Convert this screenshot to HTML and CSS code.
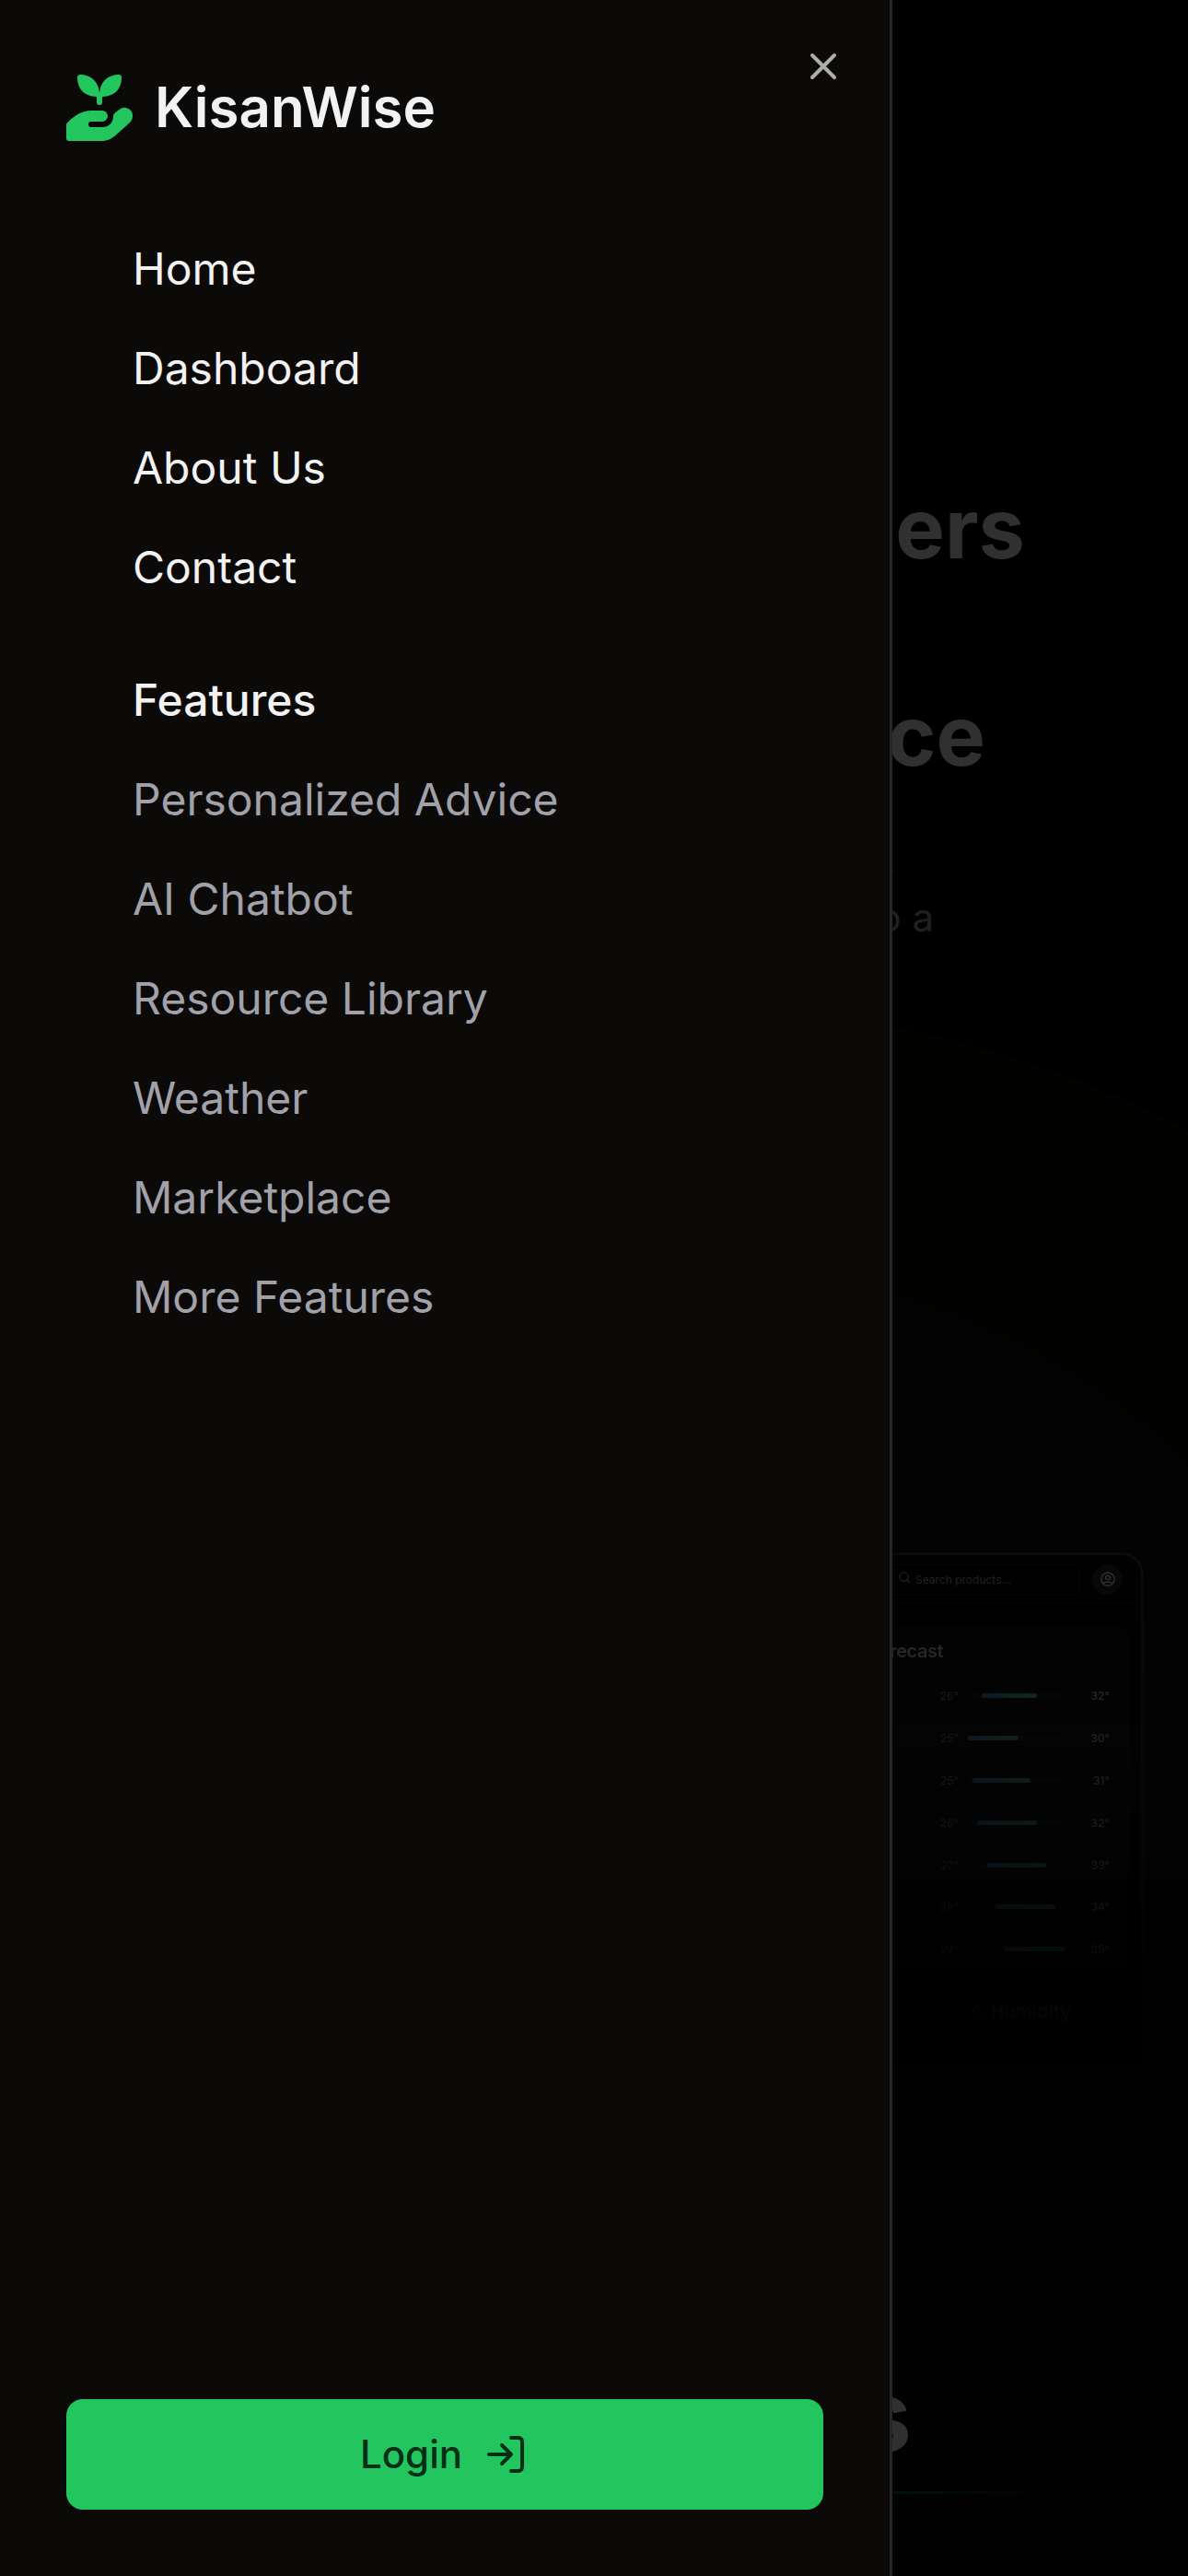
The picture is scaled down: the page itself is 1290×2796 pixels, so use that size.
FILE: index.html
```html
<!DOCTYPE html>
<html lang="en">
<head>
<meta charset="utf-8">
<title>KisanWise</title>
<link rel="stylesheet" href="styles.css">
</head>
<body>
<div class="screen">
  <aside class="drawer">
    <button class="close" aria-label="Close">
      <svg viewBox="0 0 24 24" width="48" height="48" fill="none" stroke="currentColor" stroke-width="2" stroke-linecap="round" stroke-linejoin="round"><path d="M18 6 6 18M6 6l12 12"/></svg>
    </button>
    <div class="brand">
      <svg viewBox="0 0 24 24" width="72" height="72" fill="currentColor">
        <path d="M4 1a1 1 0 0 1 1-1c4 0 6.700 2.600 7 6.600C12.300 2.600 15 0 19 0a1 1 0 0 1 1 1c0 4.200-2.400 6.900-7 7v2a1 1 0 0 1-2 0V8C6.400 7.900 4 5.200 4 1Z"/>
        <path d="M0 17.800C2.400 15.200 5.400 13 9 13h4a2 2 0 0 1 0 4H9a1 1 0 0 0 0 2h4c2.400 0 4-1.600 4-4 0-.5.200-.8.500-1.100l1.400-1.100A3 3 0 0 1 24 15c0 1-.4 1.800-1.100 2.400L18 21.800C16.400 23.200 14.700 24 12.500 24H.8a.8.800 0 0 1-.8-.8Z"/>
      </svg>
      <span>KisanWise</span>
    </div>
    <nav class="menu">
      <a>Home</a>
      <a>Dashboard</a>
      <a>About Us</a>
      <a>Contact</a>
    </nav>
    <nav class="menu features">
      <h2>Features</h2>
      <a>Personalized Advice</a>
      <a>AI Chatbot</a>
      <a>Resource Library</a>
      <a>Weather</a>
      <a>Marketplace</a>
      <a>More Features</a>
    </nav>
    <button class="login">
      <span>Login</span>
      <svg viewBox="0 0 24 24" width="48" height="48" fill="none" stroke="currentColor" stroke-width="2" stroke-linecap="round" stroke-linejoin="round"><path d="M15 3h4a2 2 0 0 1 2 2v14a2 2 0 0 1-2 2h-4M10 17l5-5-5-5M15 12H3"/></svg>
    </button>
  </aside>

  <main class="page">
    <div class="title title-first">ers</div>
    <div class="title title-last">ce</div>
    <div class="lead lead-first">,</div>
    <div class="lead">o a</div>

    <section class="preview">
      <header class="bar">
        <div class="search">
          <svg viewBox="0 0 24 24" width="14" height="14" fill="none" stroke="currentColor" stroke-width="2" stroke-linecap="round"><circle cx="11" cy="11" r="8"/><path d="m21 21-4.300-4.300"/></svg>
          <span>Search products...</span>
        </div>
        <div class="avatar">
          <svg viewBox="0 0 24 24" width="18" height="18" fill="none" stroke="currentColor" stroke-width="2"><circle cx="12" cy="12" r="9.500"/><circle cx="12" cy="9.500" r="3"/><path d="M5.500 18.500c1.500-2 4-2.500 6.500-2.500s5 .5 6.500 2.500"/></svg>
        </div>
      </header>
      <div class="forecast">
        <h3>recast</h3>
        <div class="day"><span>26°</span><i><b style="margin-left:15px;width:60px"></b></i><strong>32°</strong></div>
        <div class="day"><span>25°</span><i><b style="margin-left:0px;width:55px"></b></i><strong>30°</strong></div>
        <div class="day"><span>25°</span><i><b style="margin-left:5px;width:63px"></b></i><strong>31°</strong></div>
        <div class="day"><span>26°</span><i><b style="margin-left:10px;width:65px"></b></i><strong>32°</strong></div>
        <div class="day"><span>27°</span><i><b style="margin-left:20px;width:65px"></b></i><strong>33°</strong></div>
        <div class="day"><span>28°</span><i><b style="margin-left:30px;width:65px"></b></i><strong>34°</strong></div>
        <div class="day"><span>29°</span><i><b style="margin-left:39px;width:67px"></b></i><strong>35°</strong></div>
      </div>
      <div class="humidity">
        <svg viewBox="0 0 24 24" width="16" height="16" fill="none" stroke="currentColor" stroke-width="2" stroke-linejoin="round"><path d="M12 22a7 7 0 0 0 7-7c0-2-1-3.900-3-5.500S12.500 5.500 12 3c-.5 2.500-2 4.900-4 6.500S5 13 5 15a7 7 0 0 0 7 7Z"/></svg>
        <span>Humidity</span>
      </div>
    </section>

    <div class="section-title">s</div>
    <div class="underline"></div>
  </main>
</div>
</body>
</html>
```
FILE: styles.css
```css
* { box-sizing: border-box; }

body {
  margin: 0;
  background: #000;
  font-family: Inter, "Liberation Sans", sans-serif;
}

.screen {
  display: grid;
  grid-template-columns: 969px 321px;
  height: 2796px;
  overflow: hidden;
}

button {
  border: 0;
  padding: 0;
  background: none;
  font: inherit;
}

svg { display: block; flex: none; }

/* Drawer */
.drawer {
  position: relative;
  display: flex;
  flex-direction: column;
  padding: 81px 72px 72px;
  border-right: 3px solid #27272a;
  background: #0c0a09;
  color: #f2f2f2;
}

.close {
  position: absolute;
  top: 48px;
  right: 48px;
  color: #adadac;
}

.brand {
  display: flex;
  align-items: center;
  gap: 24px;
  height: 72px;
  color: #22c55e;
}

.brand span {
  padding-bottom: 2px;
  color: #f2f2f2;
  font-size: 60px;
  font-weight: 600;
  line-height: 70px;
}

.menu {
  display: flex;
  flex-direction: column;
  gap: 36px;
  margin-top: 103px;
  padding-left: 72px;
  font-size: 48px;
  line-height: 72px;
}

.features { margin-top: 72px; color: #a1a1aa; }

.features h2 {
  margin: 0;
  color: #f2f2f2;
  font-size: 48px;
  font-weight: 500;
  line-height: 72px;
}

.login {
  display: flex;
  align-items: center;
  justify-content: center;
  gap: 23px;
  width: 822px;
  height: 120px;
  margin-top: auto;
  padding-right: 2px;
  border-radius: 18px;
  background: #22c55e;
  color: #052e16;
  font-size: 42px;
  font-weight: 500;
  line-height: 60px;
}

/* Dimmed page behind the drawer */
.page {
  display: flex;
  flex-direction: column;
  overflow: hidden;
  white-space: nowrap;
  background:
    linear-gradient(transparent 2040px, #010101 2040px),
    radial-gradient(ellipse 760px 500px at -323px 1860px, #030303 99.800%, transparent 100%),
    radial-gradient(ellipse 1000px 620px at -323px 1700px, #020201 99.800%, transparent 100%),
    #000;
}

.title,
.lead {
  display: flex;
  justify-content: flex-end;
  color: #303030;
  font-size: 90px;
  font-weight: 700;
  line-height: 112px;
}

.title-first { margin-top: 518px; padding-right: 177px; }
.title-last { margin-top: 113px; padding-right: 220px; }

.lead {
  padding-right: 276px;
  color: #202022;
  font-size: 42px;
  font-weight: 400;
  line-height: 63px;
}

.lead-first { margin-top: 46px; padding-right: 317px; }

.preview {
  align-self: flex-end;
  flex: none;
  width: 340px;
  height: 560px;
  margin: 658px 48px 0 0;
  border: 3px solid #0b0b0b;
  border-radius: 0 24px 0 0;
  background: #010101;
  -webkit-mask-image: linear-gradient(#000, transparent);
  mask-image: linear-gradient(#000, transparent);
}

.bar {
  display: flex;
  align-items: center;
  justify-content: flex-end;
  gap: 13px;
  height: 53px;
  padding-right: 20px;
  border-bottom: 1px solid #070707;
}

.search {
  display: flex;
  align-items: center;
  gap: 5px;
  width: 220px;
  height: 33px;
  padding-left: 21px;
  border: 1px solid #080808;
  border-radius: 5px;
  color: #242424;
  font-size: 12px;
}

.search svg { margin-top: -4px; }

.avatar {
  display: grid;
  place-items: center;
  width: 33px;
  height: 33px;
  border-radius: 50%;
  background: #080808;
  color: #313131;
}

.forecast {
  height: 372px;
  margin: 26px 13px 0 0;
  padding: 12px 20px 0 0;
  border: 1px solid #060606;
  border-radius: 0 9px 0 0;
  background: #040404;
}

.forecast h3 {
  margin: 0 181px 14px 0;
  color: #303030;
  font-size: 20px;
  font-weight: 600;
  line-height: 24px;
  letter-spacing: -0.500px;
  text-align: right;
}

.day {
  display: flex;
  align-items: center;
  justify-content: flex-end;
  height: 45.800px;
  color: #222;
  font-size: 12px;
}

.day i {
  display: flex;
  width: 106px;
  height: 5px;
  margin-left: 10px;
  border-radius: 3px;
  background: #030a06;
}

.day b {
  border-radius: 3px;
  background: linear-gradient(90deg, #142238, #183422);
}

.day strong {
  width: 48px;
  color: #363636;
  font-weight: 500;
  text-align: right;
}

.humidity {
  display: flex;
  align-items: center;
  justify-content: flex-end;
  gap: 7px;
  margin: 30px 76px 0 0;
  color: #303030;
  font-size: 20px;
  font-weight: 600;
  line-height: 28px;
}

.section-title {
  display: flex;
  justify-content: flex-end;
  margin-top: 323px;
  padding-right: 300px;
  color: #303030;
  font-size: 108px;
  font-weight: 700;
  line-height: 108px;
}

.underline {
  flex: none;
  width: 170px;
  height: 3px;
  margin-top: 28px;
  background: linear-gradient(90deg, #02120a, transparent);
}
```
